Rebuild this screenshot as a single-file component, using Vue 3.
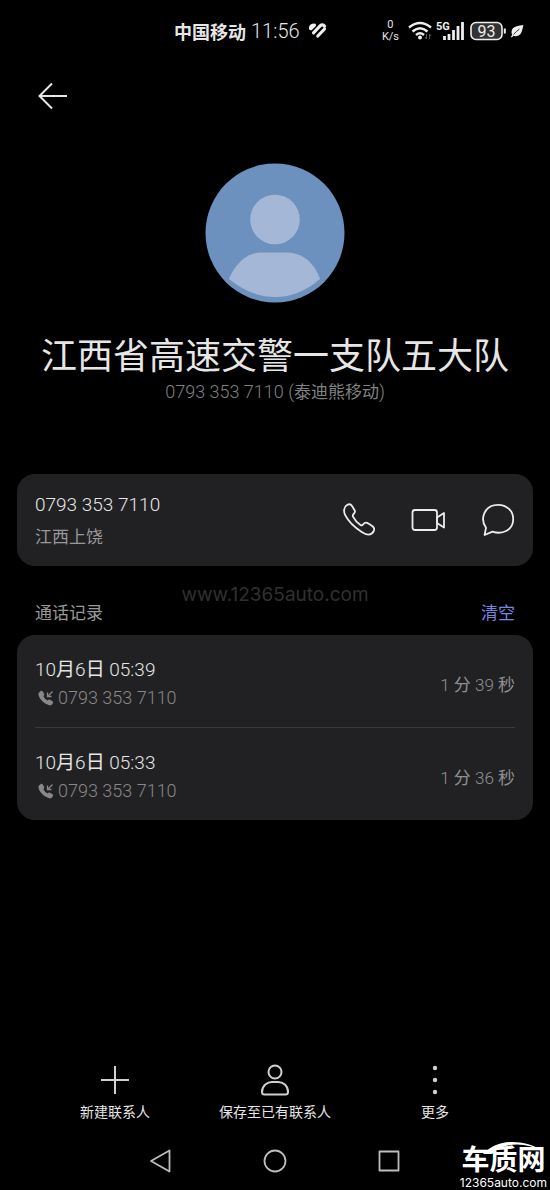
<script setup>
const phone = '0793 353 7110'
const calls = [
  { id: 1, month: 10, day: 6, clock: '05:39', minutes: 1, seconds: 39 },
  { id: 2, month: 10, day: 6, clock: '05:33', minutes: 1, seconds: 36 },
]
</script>

<template>
  <div class="screen">
    <header class="status">
      <div class="status-left">
        <span class="carrier">中国移动</span>
        <time class="clock">11:56</time>
        <svg class="heart" width="20" height="18" viewBox="0 0 20 18" aria-hidden="true">
          <g fill="none" stroke="#eee" stroke-width="3.2" stroke-linecap="round" stroke-linejoin="round">
            <path d="M2.500 6.500Q2.500 3 6.500 3L3 6.500" />
            <path d="M5.500 10.800 11.500 4.500Q14.500 1.500 16.500 4.200" />
            <path d="M9.800 14 16.500 7" />
          </g>
        </svg>
      </div>
      <div class="status-right">
        <span class="speed"><span>0</span><span>K/s</span></span>
        <svg width="24" height="20" viewBox="0 0 24 20" aria-hidden="true">
          <g fill="none" stroke="#eee" stroke-width="2.400">
            <path d="M1 6.500Q12-2.500 23 6.500" />
            <path d="M4.500 10.500Q12 4 19.500 10.500" />
            <path d="M8 14Q12 10.500 16 14" />
          </g>
          <circle cx="12" cy="16.500" r="2" fill="#eee" />
          <path d="M18.500 13v5M21.500 13v5M17 16l1.500 2M23 15l-1.500-2" stroke="#555" fill="none" />
        </svg>
        <svg width="28" height="20" viewBox="0 0 28 20" aria-hidden="true">
          <text x="0" y="9" class="net">5G</text>
          <path d="M8.500 19v-4M13 19v-6M17.500 19V9M22 19V5M26.500 19V1" stroke="#eee" stroke-width="2.800" />
        </svg>
        <svg width="38" height="20" viewBox="0 0 38 20" aria-hidden="true">
          <rect x="3" y="1.500" width="31" height="17" rx="5" fill="#333" stroke="#eee" stroke-width="1.600" />
          <path d="M36.800 7.500v5" stroke="#eee" stroke-width="2" />
          <text x="18.500" y="15.500" text-anchor="middle" class="level">93</text>
        </svg>
        <svg width="14" height="14" viewBox="0 0 14 14" aria-hidden="true">
          <path d="M13.500 1C9 2 2 1.500 1.500 8Q1.500 9.500 2.200 10.800L.8 13Q1.500 14 3.500 11.800Q5 12.500 7 12C12 11 12 6 13.500 1Z" fill="#eee" />
          <path d="M3.500 10.500Q6 7.500 9.500 5" stroke="#222" stroke-width=".9" fill="none" />
        </svg>
      </div>
    </header>

    <nav class="topbar">
      <button type="button" class="icon-btn" aria-label="返回">
        <svg width="30" height="28" viewBox="0 0 30 28">
          <path d="M14 1.500 1.500 14 14 26.500M1.500 14H29" fill="none" stroke="#e6e6e6" stroke-width="2" />
        </svg>
      </button>
    </nav>

    <section class="profile">
      <svg width="140" height="140" viewBox="0 0 140 140" aria-hidden="true">
        <circle cx="70" cy="70" r="69.500" fill="#6d91bf" />
        <circle cx="70" cy="56.500" r="24.800" fill="#a4b7d6" />
        <path d="M24 116C30 101 42 89.500 56 89.500H82C98 89.500 110 101 115 116Q94 134 70 134T24 116Z" fill="#a4b7d6" />
      </svg>
      <h1>江西省高速交警一支队五大队</h1>
      <p>{{ phone }} (<span class="tag">泰迪熊移动</span>)</p>
    </section>

    <section class="card contact">
      <div class="who">
        <span class="number">{{ phone }}</span>
        <span class="place">江西上饶</span>
      </div>
      <div class="actions">
        <button type="button" class="icon-btn" aria-label="拨打电话">
          <svg width="34" height="34" viewBox="0 0 34 34">
            <path d="M3.200 6.500Q3.500 3.500 6 2Q9.200.200 11 3L13.600 7.200Q14.500 8.800 13 10.500Q11.300 12.200 12 13.600Q14.800 19 19.500 22Q21 23 22 21.500Q23.800 19.200 26 19.800Q28.500 20.800 31.800 23.500Q34 25.500 32.800 28Q31 31.500 27.500 31.700Q25 31.700 20.700 29Q9 21.500 4.200 12.200Q2.800 9.500 3.200 6.500Z" class="line" />
          </svg>
        </button>
        <button type="button" class="icon-btn" aria-label="视频通话">
          <svg width="34" height="34" viewBox="0 0 34 34">
            <rect x="1.500" y="7" width="24.500" height="20" rx="2.500" class="line" />
            <path d="M26 14.500 33 10V24.500L26 20Z" class="line" />
          </svg>
        </button>
        <button type="button" class="icon-btn" aria-label="发送信息">
          <svg width="34" height="34" viewBox="0 0 34 34">
            <path d="M3.600 32 5 24.800C-1.500 15.500 3.500 1.800 17 1.800C26 1.800 32.200 8 32.200 16C32.200 27 21.500 32 11.500 28.600Z" class="line" />
          </svg>
        </button>
      </div>
    </section>

    <section class="history">
      <div class="history-head">
        <h2>通话记录</h2>
        <button type="button" class="clear">清空</button>
      </div>
      <ul class="card log">
        <li v-for="call in calls" :key="call.id">
          <div>
            <div class="when">{{ call.month }}<b>月</b>{{ call.day }}<b>日</b> {{ call.clock }}</div>
            <div class="from">
              <svg width="16" height="16" viewBox="0 0 16 16" aria-hidden="true">
                <path d="M1 2.500 3 .8Q4 .4 4.800 1.500L6.200 4Q6.600 5 5.400 6.200Q6.600 9 9.600 10.400Q10.800 9.200 12 9.800L14.500 11.200Q15.600 12 15 13L13.500 15Q12.500 15.800 10.500 15C5 12.800 2 9.500.5 5Q.2 3.400 1 2.500Z" fill="#88888a" />
                <path d="M14.500 1.500 9.500 6.500M9.500 2.500V6.500H13.500" fill="none" stroke="#88888a" stroke-width="1.300" />
              </svg>
              <span>{{ phone }}</span>
            </div>
          </div>
          <span class="length">{{ call.minutes }} <b>分</b> {{ call.seconds }} <b>秒</b></span>
        </li>
      </ul>
    </section>

    <nav class="toolbar">
      <button type="button">
        <svg width="32" height="32" viewBox="0 0 32 32" aria-hidden="true">
          <path d="M16 2V30M2 16H30" class="tool" />
        </svg>
        新建联系人
      </button>
      <button type="button">
        <svg width="32" height="32" viewBox="0 0 32 32" aria-hidden="true">
          <circle cx="16" cy="8" r="6.500" class="tool" />
          <path d="M3 28C3 21.500 8.500 18 13 18H19C24 18 29 21.500 29 28Q29 30.500 26.500 30.500H5.500Q3 30.500 3 28Z" class="tool" />
        </svg>
        保存至已有联系人
      </button>
      <button type="button">
        <svg width="32" height="32" viewBox="0 0 32 32" aria-hidden="true">
          <g fill="#d0d0d0">
            <circle cx="16" cy="4" r="2.200" />
            <circle cx="16" cy="16" r="2.200" />
            <circle cx="16" cy="28" r="2.200" />
          </g>
        </svg>
        更多
      </button>
    </nav>

    <nav class="system">
      <button type="button" class="icon-btn" aria-label="后退">
        <svg width="24" height="24" viewBox="0 0 24 24"><path d="M20.500 1.500V22.500L2 12Z" class="sys" /></svg>
      </button>
      <button type="button" class="icon-btn" aria-label="主屏幕">
        <svg width="24" height="24" viewBox="0 0 24 24"><circle cx="12" cy="12" r="10.500" class="sys" /></svg>
      </button>
      <button type="button" class="icon-btn" aria-label="最近任务">
        <svg width="24" height="24" viewBox="0 0 24 24"><rect x="2.500" y="2.500" width="19" height="19" class="sys" /></svg>
      </button>
    </nav>

    <div class="mark">www.12365auto.com</div>
    <div class="brand">
      <svg width="84" height="14" viewBox="0 0 84 14" aria-hidden="true">
        <path d="M22 13C37-3 62-2 83 10C63 1 43 1 31 13Z" fill="#fff" />
      </svg>
      <strong>车质网</strong>
      <span>12365auto.com</span>
    </div>
  </div>
</template>

<style>
body {
  background: #000;
}
</style>

<style scoped>
.screen {
  position: relative;
  box-sizing: border-box;
  display: flex;
  flex-direction: column;
  min-height: 100vh;
  background: #000;
  color: #e6e6e6;
  font-family: Roboto, "Noto Sans CJK SC", sans-serif;
  font-weight: 300;
}
h1, h2, p, ul {
  margin: 0;
  padding: 0;
  font-weight: 300;
}
b {
  font-weight: 400;
}
svg {
  display: block;
  flex: none;
}
button {
  border: 0;
  padding: 0;
  background: none;
  color: inherit;
  font: inherit;
  cursor: pointer;
}
.status {
  display: flex;
  justify-content: space-between;
  align-items: center;
  height: 62px;
  padding: 0 26px 0 174px;
}
.status-left {
  display: flex;
  align-items: center;
}
.carrier {
  font-size: 18px;
  font-weight: 700;
}
.clock {
  margin-left: 5px;
  font-size: 20px;
}
.heart {
  margin-left: 8px;
}
.status-right {
  display: flex;
  align-items: center;
  gap: 4px;
}
.speed {
  display: flex;
  flex-direction: column;
  align-items: center;
  margin-right: 5px;
  font-size: 11px;
  font-weight: 400;
  line-height: 12px;
}
.net {
  fill: #eee;
  font-size: 11px;
  font-weight: 700;
}
.level {
  fill: #eee;
  font-size: 16px;
  font-weight: 400;
}
.topbar {
  display: flex;
  padding: 20px 38px;
}
.profile {
  display: flex;
  flex-direction: column;
  align-items: center;
  padding-top: 33px;
  text-align: center;
}
.profile h1 {
  margin-top: 30px;
  font-size: 36px;
  font-weight: 400;
  line-height: 48px;
}
.profile p {
  font-size: 18px;
  line-height: 22px;
  color: #808082;
}
.tag {
  font-size: 17px;
  font-weight: 400;
}
.card {
  margin: 0 17px;
  border-radius: 18px;
  background: #212123;
}
.contact {
  display: flex;
  justify-content: space-between;
  align-items: center;
  margin-top: 71px;
  padding: 14px 18px;
}
.who {
  display: flex;
  flex-direction: column;
}
.number {
  font-size: 19px;
  line-height: 34px;
}
.place {
  font-size: 17px;
  font-weight: 400;
  line-height: 30px;
  color: #98989a;
}
.actions {
  display: flex;
  gap: 36px;
}
.line {
  fill: none;
  stroke: #ececec;
  stroke-width: 1.8;
  stroke-linejoin: round;
}
.history-head {
  display: flex;
  justify-content: space-between;
  align-items: center;
  padding: 34px 35px 9px;
  font-size: 17px;
  line-height: 26px;
}
.history-head h2 {
  font-size: 17px;
  font-weight: 400;
  color: #98989a;
}
.clear {
  font-weight: 400;
  color: #7886e0;
}
.log {
  padding: 0 18px;
  list-style: none;
}
.log li {
  display: flex;
  justify-content: space-between;
  align-items: center;
  padding: 20px 0 16px;
}
.log li + li {
  border-top: 1px solid #39393b;
}
.when {
  font-size: 19px;
  line-height: 30px;
}
.from {
  display: flex;
  align-items: center;
  gap: 4px;
  padding-left: 3px;
  font-size: 18px;
  line-height: 26px;
  color: #88888a;
}
.length {
  font-size: 17px;
  color: #909092;
}
.toolbar {
  display: grid;
  grid-template-columns: repeat(3, 1fr);
  margin-top: auto;
  padding: 0 35px;
}
.toolbar button {
  display: flex;
  flex-direction: column;
  align-items: center;
  gap: 4px;
  font-size: 14px;
  font-weight: 400;
  line-height: 24px;
}
.tool {
  fill: none;
  stroke: #d0d0d0;
  stroke-width: 2;
}
.system {
  display: flex;
  justify-content: center;
  gap: 90px;
  padding: 25px 0 17px;
}
.sys {
  fill: none;
  stroke: #bdbdbd;
  stroke-width: 1.8;
  stroke-linejoin: round;
}
.mark {
  position: absolute;
  top: 583px;
  left: 0;
  right: 0;
  text-align: center;
  font-family: Inter, sans-serif;
  font-size: 19px;
  font-weight: 400;
  line-height: 24px;
  color: #303032;
  pointer-events: none;
}
.brand {
  position: absolute;
  right: 3px;
  bottom: 0;
  display: flex;
  flex-direction: column;
  align-items: center;
  color: #fff;
  pointer-events: none;
}
.brand svg {
  margin-bottom: -8px;
}
.brand strong {
  font-size: 28px;
  font-weight: 700;
  line-height: 28px;
}
.brand span {
  font-family: Inter, sans-serif;
  font-size: 12px;
  font-weight: 400;
  line-height: 15px;
}
</style>
